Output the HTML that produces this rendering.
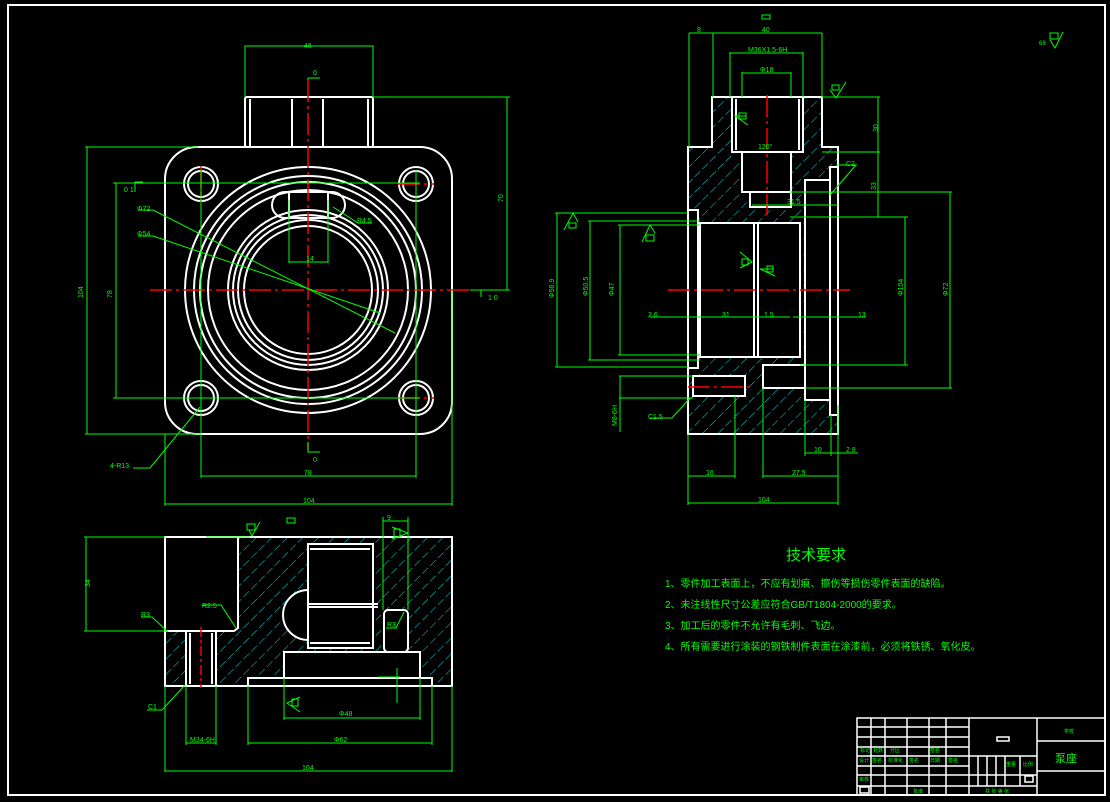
<!DOCTYPE html>
<html><head><meta charset="utf-8"><style>
html,body{margin:0;padding:0;background:#000;width:1110px;height:802px;overflow:hidden}
svg{display:block}
text{font-family:"Liberation Sans","Noto Sans CJK SC",sans-serif;fill:#00ff00}
</style></head><body>
<svg width="1110" height="802" viewBox="0 0 1110 802" xmlns="http://www.w3.org/2000/svg">
<defs>
<pattern id="h" width="11" height="11" patternUnits="userSpaceOnUse" patternTransform="rotate(45)">
<rect width="11" height="11" fill="#000"/><line x1="0" y1="0" x2="0" y2="11" stroke="#0dd" stroke-width="1" stroke-dasharray="8 3"/>
</pattern>
</defs>
<rect x="8" y="5" width="1097" height="790" fill="none" stroke="#fff" stroke-width="2"/>

<!-- FRONT VIEW -->
<g fill="none" stroke="#fff" stroke-width="2">
<rect x="165" y="147" width="287" height="287" rx="32"/>
<rect x="245" y="97" width="128" height="50" rx="2"/>
<line x1="250" y1="99" x2="250" y2="147"/><line x1="292" y1="99" x2="292" y2="147"/>
<line x1="323" y1="99" x2="323" y2="147"/><line x1="368" y1="99" x2="368" y2="147"/>
<circle cx="201" cy="184" r="17"/><circle cx="201" cy="184" r="13"/>
<circle cx="416" cy="184" r="17"/><circle cx="416" cy="184" r="13"/>
<circle cx="201" cy="398" r="17"/><circle cx="201" cy="398" r="13"/>
<circle cx="416" cy="398" r="17"/><circle cx="416" cy="398" r="13"/>
<circle cx="308" cy="290" r="123"/><circle cx="308" cy="290" r="114"/>
<circle cx="308" cy="290" r="108"/><circle cx="308" cy="290" r="100"/>
<circle cx="308" cy="290" r="80"/><circle cx="308" cy="290" r="75"/>
<circle cx="308" cy="290" r="70"/><circle cx="308" cy="290" r="64"/>
<rect x="272" y="192" width="73" height="26" rx="13"/>
<line x1="289" y1="193" x2="289" y2="218"/><line x1="328" y1="193" x2="328" y2="218"/>
</g>
<g stroke="#f00" stroke-width="1.5" stroke-dasharray="22 4 3 4">
<line x1="308" y1="80" x2="308" y2="450"/><line x1="150" y1="290" x2="470" y2="290"/>
<line x1="201" y1="166" x2="201" y2="202"/><line x1="398" y1="184" x2="434" y2="184"/>
<line x1="398" y1="398" x2="434" y2="398"/>
</g>
<g stroke="#0f0" stroke-width="1" fill="none">
<polyline points="245,97 245,46 373,46 373,97"/>
<polyline points="373,97 510,97"/><line x1="507" y1="97" x2="507" y2="290"/><line x1="470" y1="290" x2="510" y2="290"/>
<polyline points="198,147 85,147"/><line x1="87" y1="147" x2="87" y2="434"/><line x1="85" y1="434" x2="200" y2="434"/>
<line x1="113" y1="183" x2="420" y2="183"/><line x1="113" y1="398" x2="420" y2="398"/>
<line x1="116" y1="183" x2="116" y2="398"/>
<line x1="201" y1="170" x2="201" y2="478"/><line x1="416" y1="170" x2="416" y2="478"/>
<line x1="201" y1="476" x2="416" y2="476"/>
<line x1="165" y1="434" x2="165" y2="506"/><line x1="452" y1="290" x2="452" y2="506"/>
<line x1="165" y1="504" x2="452" y2="504"/>
<polyline points="138,210 153,210 395,333"/><polyline points="138,236 153,236 380,313"/>
<polyline points="135,468 133,468 150,468 200,407"/>
<line x1="289" y1="200" x2="289" y2="263"/><line x1="328" y1="200" x2="328" y2="263"/><line x1="289" y1="262" x2="328" y2="262"/>
<polyline points="333,207 358,223 372,223"/>
<polyline points="308,80 308,78 320,78"/><polyline points="308,442 308,452 320,452"/>
<polyline points="135,192 135,182 143,182"/><polyline points="481,297 481,290 490,290"/>
</g>
<g font-size="7">
<text x="304" y="48">46</text><text x="313" y="75">0</text><text x="313" y="462">0</text>
<text x="497" y="196" transform="rotate(-90 503 196)">70</text>
<text x="77" y="292" transform="rotate(-90 83 292)">104</text>
<text x="106" y="292" transform="rotate(-90 112 292)">78</text>
<text x="124" y="192">0 1</text><text x="488" y="300">1 0</text>
<text x="137" y="211">Φ72</text><text x="137" y="236">Φ54</text>
<text x="357" y="223">R4.5</text><text x="306" y="261">14</text>
<text x="110" y="468">4-R13</text><text x="304" y="475">78</text><text x="303" y="503">104</text>
</g>

<!-- SIDE VIEW -->
<path d="M688,147 H712 V97 H822 V147 H838 V434 H688 Z" fill="url(#h)"/>
<g fill="#000" stroke="#fff" stroke-width="2">
<rect x="732" y="97" width="71" height="55"/>
<rect x="742" y="152" width="49" height="40"/>
<rect x="750" y="192" width="41" height="15"/>
<rect x="700" y="223" width="100" height="134"/>
<rect x="688" y="210" width="10" height="158"/>
<rect x="805" y="180" width="25" height="220"/>
<rect x="830" y="167" width="8" height="248"/>
<rect x="693" y="376" width="52" height="20"/>
<rect x="763" y="365" width="42" height="23"/>
</g>
<g fill="none" stroke="#fff" stroke-width="2">
<path d="M688,147 H712 V97 H822 V147 H838 V434 H688 Z"/>
<line x1="754" y1="224" x2="754" y2="357"/><line x1="758" y1="224" x2="758" y2="357"/>
<line x1="736" y1="99" x2="736" y2="150"/><line x1="799" y1="99" x2="799" y2="150"/>
</g>
<g stroke="#f00" stroke-width="1.5" stroke-dasharray="22 4 3 4">
<line x1="767" y1="95" x2="767" y2="215"/><line x1="668" y1="290" x2="850" y2="290"/>
<line x1="688" y1="387" x2="750" y2="387"/>
</g>
<g stroke="#0f0" stroke-width="1" fill="none">
<line x1="689" y1="33" x2="689" y2="147"/><line x1="713" y1="33" x2="713" y2="97"/><line x1="822" y1="33" x2="822" y2="97"/>
<line x1="689" y1="33" x2="822" y2="33"/>
<line x1="730" y1="53" x2="803" y2="53"/><line x1="730" y1="52" x2="730" y2="97"/><line x1="803" y1="52" x2="803" y2="97"/>
<line x1="742" y1="73" x2="791" y2="73"/><line x1="742" y1="72" x2="742" y2="97"/><line x1="791" y1="72" x2="791" y2="97"/>
<line x1="822" y1="97" x2="880" y2="97"/><line x1="878" y1="97" x2="878" y2="217"/>
<line x1="822" y1="152" x2="880" y2="152"/><line x1="790" y1="217" x2="908" y2="217"/>
<line x1="790" y1="192" x2="952" y2="192"/><line x1="950" y1="192" x2="950" y2="388"/><line x1="805" y1="388" x2="952" y2="388"/>
<line x1="905" y1="217" x2="905" y2="365"/><line x1="800" y1="365" x2="908" y2="365"/>
<line x1="752" y1="205" x2="838" y2="205"/>
<line x1="555" y1="213" x2="688" y2="213"/><line x1="557" y1="213" x2="557" y2="367"/><line x1="555" y1="367" x2="688" y2="367"/>
<line x1="588" y1="221" x2="700" y2="221"/><line x1="590" y1="221" x2="590" y2="360"/><line x1="588" y1="360" x2="700" y2="360"/>
<line x1="618" y1="225" x2="700" y2="225"/><line x1="620" y1="225" x2="620" y2="355"/><line x1="618" y1="355" x2="700" y2="355"/>
<line x1="650" y1="317" x2="790" y2="317"/><line x1="793" y1="317" x2="866" y2="317"/>
<line x1="619" y1="376" x2="693" y2="376"/><line x1="619" y1="398" x2="693" y2="398"/><line x1="620" y1="376" x2="620" y2="432"/>
<polyline points="650,418 672,418 690,398"/>
<polyline points="836,165 856,165 830,195"/>
<line x1="688" y1="434" x2="688" y2="505"/><line x1="838" y1="405" x2="838" y2="505"/>
<line x1="688" y1="503" x2="838" y2="503"/>
<line x1="735" y1="396" x2="735" y2="478"/><line x1="688" y1="476" x2="735" y2="476"/>
<line x1="763" y1="388" x2="763" y2="478"/><line x1="763" y1="476" x2="838" y2="476"/>
<line x1="805" y1="400" x2="805" y2="456"/><line x1="831" y1="415" x2="831" y2="456"/><line x1="805" y1="453" x2="858" y2="453"/>
</g>
<g font-size="7">
<text x="697" y="32">8</text><text x="762" y="32">40</text>
<text x="748" y="52">M36X1.5-6H</text><text x="760" y="72">Φ18</text>
<text x="758" y="149">120°</text><text x="846" y="166">C2</text>
<text x="868" y="130" transform="rotate(-90 874 126)">30</text>
<text x="868" y="186" transform="rotate(-90 874 184)">33</text>
<text x="787" y="204">31.5</text>
<text x="895" y="292" transform="rotate(-90 901 290)">Φ104</text>
<text x="940" y="292" transform="rotate(-90 946 290)">Φ72</text>
<text x="545" y="295" transform="rotate(-90 551 292)">Φ56.9</text>
<text x="577" y="295" transform="rotate(-90 583 290)">Φ50.5</text>
<text x="606" y="292" transform="rotate(-90 612 290)">Φ47</text>
<text x="648" y="317">2.6</text><text x="722" y="317">31</text><text x="764" y="317">1.5</text><text x="858" y="317">13</text>
<text x="648" y="419">C1.5</text>
<text x="606" y="425" transform="rotate(-90 612 420)">M8-6H</text>
<text x="706" y="475">16</text><text x="792" y="475">27.5</text>
<text x="814" y="452">10</text><text x="846" y="452">2.8</text>
<text x="758" y="502">104</text>
</g>
<g stroke="#0f0" fill="none" stroke-width="1">
<rect x="762" y="15" width="8" height="4"/>
<rect x="832" y="85" width="7" height="5"/><polyline points="830,90 836,98 846,82"/>
<rect x="739" y="113" width="7" height="6"/><polyline points="746,116 735,116 748,125"/>
<rect x="569" y="223" width="7" height="5"/><polyline points="564,230 573,213 578,222"/>
<rect x="646" y="235" width="8" height="6"/><polyline points="642,242 650,225 655,233"/>
<rect x="742" y="259" width="6" height="6"/><polyline points="740,252 752,262 740,268"/>
<rect x="767" y="266" width="6" height="6"/><polyline points="773,269 760,269 775,276"/>
<rect x="1050" y="33" width="8" height="6"/><polyline points="1050,40 1055,48 1063,32"/>
</g>
<text x="1039" y="45" font-size="6">68</text>

<!-- BOTTOM VIEW -->
<path d="M238,537 H452 V686 H165 V631 H238 Z" fill="url(#h)"/>
<g fill="#000" stroke="#fff" stroke-width="2">
<path d="M308,590 A25,25 0 0 0 308,640 Z"/>
<rect x="308" y="544" width="65" height="104"/>
<rect x="384" y="610" width="24" height="42" rx="4"/>
<rect x="284" y="652" width="136" height="26"/>
<rect x="248" y="678" width="184" height="8"/>
<rect x="186" y="631" width="30" height="55"/>
</g>
<g fill="none" stroke="#fff" stroke-width="2">
<path d="M165,537 H452 V686 H165 Z"/>
<path d="M238,537 V628 L234,631 H165"/>
<line x1="308" y1="604" x2="378" y2="604"/><line x1="308" y1="607" x2="378" y2="607"/>
<line x1="310" y1="549" x2="370" y2="549"/><line x1="310" y1="643" x2="370" y2="643"/>
<line x1="190" y1="633" x2="190" y2="684"/><line x1="212" y1="633" x2="212" y2="684"/>
</g>
<line x1="201" y1="627" x2="201" y2="688" stroke="#f00" stroke-width="1.5" stroke-dasharray="10 3 3 3"/>
<g stroke="#0f0" stroke-width="1" fill="none">
<line x1="84" y1="537" x2="165" y2="537"/><line x1="86" y1="537" x2="86" y2="631"/><line x1="84" y1="631" x2="168" y2="631"/>
<line x1="206" y1="537" x2="250" y2="537"/>
<polyline points="141,617 152,617 168,632"/><polyline points="202,605 221,605 236,628"/>
<polyline points="386,628 396,628 404,612"/>
<polyline points="147,710 162,710 185,685"/>
<line x1="186" y1="686" x2="186" y2="745"/><line x1="216" y1="686" x2="216" y2="745"/><line x1="186" y1="743" x2="216" y2="743"/>
<line x1="248" y1="686" x2="248" y2="745"/><line x1="432" y1="686" x2="432" y2="745"/><line x1="248" y1="743" x2="432" y2="743"/>
<line x1="284" y1="678" x2="284" y2="720"/><line x1="420" y1="678" x2="420" y2="720"/><line x1="284" y1="718" x2="420" y2="718"/>
<line x1="165" y1="686" x2="165" y2="772"/><line x1="452" y1="686" x2="452" y2="772"/><line x1="165" y1="771" x2="452" y2="771"/>
<line x1="383" y1="517" x2="383" y2="610"/><line x1="408" y1="517" x2="408" y2="610"/><line x1="383" y1="521" x2="408" y2="521"/>
<line x1="397" y1="668" x2="397" y2="703"/><line x1="378" y1="677" x2="400" y2="677"/>
<rect x="287" y="518" width="8" height="5"/>
<rect x="247" y="524" width="8" height="6"/><polyline points="249,530 252,536 260,522"/>
<rect x="394" y="529" width="6" height="8"/><polyline points="392,527 408,533 392,539"/>
<rect x="292" y="699" width="6" height="7"/><polyline points="300,697 287,703 300,712"/>
</g>
<g font-size="7">
<text x="83" y="588" transform="rotate(-90 86 584)">34</text>
<text x="141" y="617">R3</text><text x="202" y="608">R2.5</text><text x="387" y="627">R3</text>
<text x="148" y="709">C1</text><text x="190" y="742">M34-6H</text><text x="334" y="742">Φ62</text>
<text x="339" y="716">Φ48</text><text x="302" y="770">104</text><text x="387" y="520">9</text>
</g>

<!-- TECH REQUIREMENTS -->
<text x="786" y="560" font-size="15">技术要求</text>
<g font-size="10">
<text x="665" y="587">1、零件加工表面上，不应有划痕、擦伤等损伤零件表面的缺陷。</text>
<text x="665" y="608">2、未注线性尺寸公差应符合GB/T1804-2000的要求。</text>
<text x="665" y="629">3、加工后的零件不允许有毛刺、飞边。</text>
<text x="665" y="650">4、所有需要进行涂装的钢铁制件表面在涂漆前，必须将铁锈、氧化皮。</text>
</g>

<!-- TITLE BLOCK -->
<g fill="none" stroke="#fff" stroke-width="1.5">
<rect x="857" y="718" width="248" height="77"/>
<line x1="969" y1="718" x2="969" y2="795"/><line x1="1037" y1="718" x2="1037" y2="795"/>
<line x1="1037" y1="741" x2="1105" y2="741"/><line x1="1037" y1="771" x2="1105" y2="771"/>
<line x1="871" y1="718" x2="871" y2="795"/><line x1="885" y1="718" x2="885" y2="795"/>
<line x1="907" y1="718" x2="907" y2="795"/><line x1="929" y1="718" x2="929" y2="795"/>
<line x1="946" y1="718" x2="946" y2="795"/>
<line x1="857" y1="727" x2="969" y2="727"/><line x1="857" y1="737" x2="969" y2="737"/>
<line x1="857" y1="747" x2="969" y2="747"/><line x1="857" y1="756" x2="1037" y2="756"/>
<line x1="857" y1="766" x2="969" y2="766"/><line x1="857" y1="775" x2="1037" y2="775"/>
<line x1="857" y1="786" x2="1037" y2="786"/>
<line x1="978" y1="756" x2="978" y2="786"/><line x1="987" y1="756" x2="987" y2="786"/>
<line x1="996" y1="756" x2="996" y2="786"/><line x1="1005" y1="756" x2="1005" y2="786"/>
<line x1="1020" y1="756" x2="1020" y2="786"/>
<rect x="997" y="737" width="12" height="4"/><rect x="1025" y="776" width="8" height="6"/>
<rect x="860" y="787" width="9" height="6"/>
</g>
<g font-size="5" style="fill:#fff">
<text x="860" y="752">标记</text><text x="873" y="752">处数</text><text x="890" y="752">分区</text>
<text x="930" y="752">签名</text><text x="859" y="762">设计</text><text x="872" y="762">签名</text>
<text x="888" y="762">标准化</text><text x="909" y="762">签名</text><text x="930" y="762">日期</text>
<text x="948" y="762">签名</text><text x="859" y="781">审核</text><text x="913" y="793">批准</text>
<text x="1006" y="766">重量</text><text x="1023" y="766">比例</text>
<text x="985" y="793">共 张 第 张</text><text x="1064" y="733">学校</text>
</g>
<text x="1055" y="762" font-size="11">泵座</text>
</svg>
</body></html>
